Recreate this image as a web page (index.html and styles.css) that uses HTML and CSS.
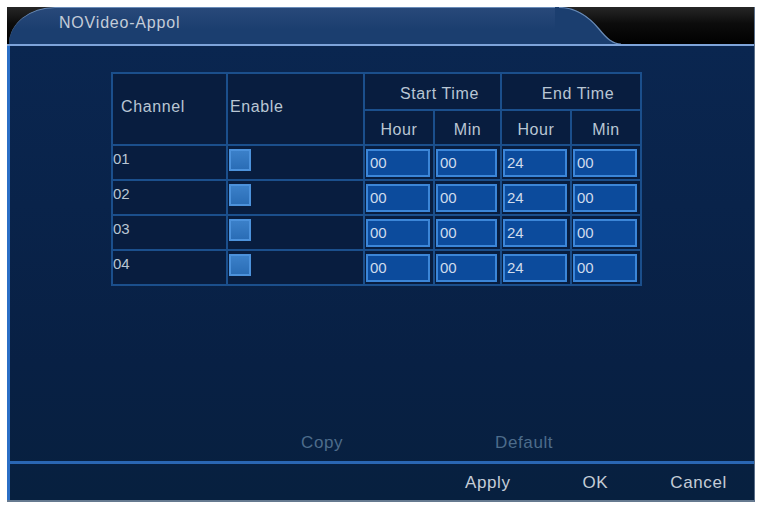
FILE: index.html
```html
<!DOCTYPE html>
<html lang="en">
<head>
    <meta charset="UTF-8">
    <title>NOVideo-Appol</title>
    <link rel="stylesheet" href="styles.css">
</head>
<body>
    <div class="screen">
        <div class="titlebar">
            <div class="tab">NOVideo-Appol</div>
            <svg class="tab-curve" width="66" height="37" viewBox="0 0 66 37">
                <path d="M0 0 L4 0 C22 0 34 10 44 22 C52 32 58 37 66 37 L0 37 Z" fill="#1b3e6f"/>
                <path d="M4 0.5 C22 0.5 34 10 44 22 C52 32 58 37 66 37" fill="none" stroke="#6a8cb8" stroke-width="1.2"/>
            </svg>
            <div class="tab-rest"></div>
        </div>
        <div class="main">
            <div class="content">
                <table class="grid">
                    <tr class="head1">
                        <th rowspan="2" class="c-ch">Channel</th>
                        <th rowspan="2" class="c-en">Enable</th>
                        <th colspan="2" class="grp">Start Time</th>
                        <th colspan="2" class="grp">End Time</th>
                    </tr>
                    <tr class="head2">
                        <th class="c-t">Hour</th>
                        <th class="c-t c-narrow">Min</th>
                        <th class="c-t">Hour</th>
                        <th class="c-t">Min</th>
                    </tr>
                    <tr>
                        <td class="num">01</td>
                        <td class="box"><span class="check"></span></td>
                        <td><span class="field">00</span></td>
                        <td><span class="field">00</span></td>
                        <td><span class="field">24</span></td>
                        <td><span class="field">00</span></td>
                    </tr>
                    <tr>
                        <td class="num">02</td>
                        <td class="box"><span class="check"></span></td>
                        <td><span class="field">00</span></td>
                        <td><span class="field">00</span></td>
                        <td><span class="field">24</span></td>
                        <td><span class="field">00</span></td>
                    </tr>
                    <tr>
                        <td class="num">03</td>
                        <td class="box"><span class="check"></span></td>
                        <td><span class="field">00</span></td>
                        <td><span class="field">00</span></td>
                        <td><span class="field">24</span></td>
                        <td><span class="field">00</span></td>
                    </tr>
                    <tr>
                        <td class="num">04</td>
                        <td class="box"><span class="check"></span></td>
                        <td><span class="field">00</span></td>
                        <td><span class="field">00</span></td>
                        <td><span class="field">24</span></td>
                        <td><span class="field">00</span></td>
                    </tr>
                </table>
            </div>
            <div class="tools">
                <span class="dim copy">Copy</span>
                <span class="dim default">Default</span>
            </div>
            <div class="actions">
                <span class="apply">Apply</span>
                <span class="ok">OK</span>
                <span class="cancel">Cancel</span>
            </div>
        </div>
    </div>
</body>
</html>
```

FILE: styles.css
```css
body {
    margin: 0;
    background: #fff;
    font-family: "Liberation Sans", Arial, sans-serif;
}

.screen {
    margin: 7px 0 0 7px;
    width: 748px;
    height: 495px;
    background: #0a2348;
    display: flex;
    flex-direction: column;
    border-right: 1px solid #5a6e88;
    border-bottom: 2px solid #667a90;
    box-sizing: border-box;
}

.titlebar {
    height: 37px;
    display: flex;
    background: linear-gradient(#262626, #0c0c0c 45%, #000);
    border-bottom: 2px solid #7ea4da;
}

.tab {
    width: 546px;
    margin-left: 2px;
    padding-left: 50px;
    line-height: 30px;
    font-size: 16px;
    letter-spacing: 0.8px;
    color: #c4ccd8;
    background: linear-gradient(#28497a, #1b3e6f 60%);
    border-top-left-radius: 46px 37px;
    border-top: 1px solid #6a8cb8;
    box-sizing: border-box;
}

.tab-curve {
    display: block;
    flex: none;
}

.tab-rest {
    flex: 1;
}

.main {
    flex: 1;
    display: flex;
    flex-direction: column;
    border-left: 3px solid #2b6fc6;
    background: linear-gradient(#0a2650, #082044 70%, #07203f);
}

.content {
    height: 379px;
    padding: 26px 0 0 101px;
    box-sizing: border-box;
}

.grid {
    border-collapse: collapse;
    color: #b9c6d4;
    font-size: 16px;
    letter-spacing: 0.6px;
    background: #081d3f;
}

.grid th,
.grid td {
    border: 2px solid #1b4f8c;
    padding: 0;
    font-weight: normal;
    height: 33px;
}

.head1 th.grp {
    height: 30px;
    padding: 5px 0 0 14px;
}

.head2 th {
    height: 29px;
    padding-top: 4px;
}

.c-ch {
    width: 105px;
    text-align: left;
    padding: 0 0 4px 8px !important;
}

.c-en {
    width: 133px;
    text-align: left;
    padding: 0 0 4px 2px !important;
}

.c-t {
    width: 68px;
}

.c-narrow {
    width: 65px;
}

.grid td.num {
    vertical-align: top;
    font-size: 15px;
    letter-spacing: 0;
    padding-top: 5px;
    height: 28px;
    line-height: 16px;
}

.grid td.box {
    vertical-align: top;
    padding: 3px 0 0 1px;
    height: 30px;
}

.check {
    display: block;
    width: 22px;
    height: 22px;
    background: linear-gradient(#3b80c9, #2a6db6);
    border: 2px solid #4c92dc;
    box-sizing: border-box;
}

.field {
    display: block;
    margin: 0 3px 0 1px;
    height: 28px;
    line-height: 24px;
    padding-left: 2px;
    font-size: 15px;
    letter-spacing: 0;
    color: #d0dcec;
    background: #0c4b9c;
    border: 2px solid #3c86d8;
    box-sizing: border-box;
}

.tools {
    height: 36px;
    display: flex;
    font-size: 17px;
    letter-spacing: 0.6px;
    line-height: 36px;
    border-bottom: 3px solid #2a66b2;
}

.dim {
    color: #4d6c8b;
}

.copy {
    margin-left: 291px;
}

.default {
    margin-left: 152px;
}

.actions {
    flex: 1;
    display: flex;
    align-items: center;
    font-size: 17px;
    letter-spacing: 0.6px;
    color: #c4ccd6;
    padding-top: 2px;
}

.apply {
    margin-left: 455px;
}

.ok {
    margin-left: 72px;
}

.cancel {
    margin-left: 62px;
}
```
